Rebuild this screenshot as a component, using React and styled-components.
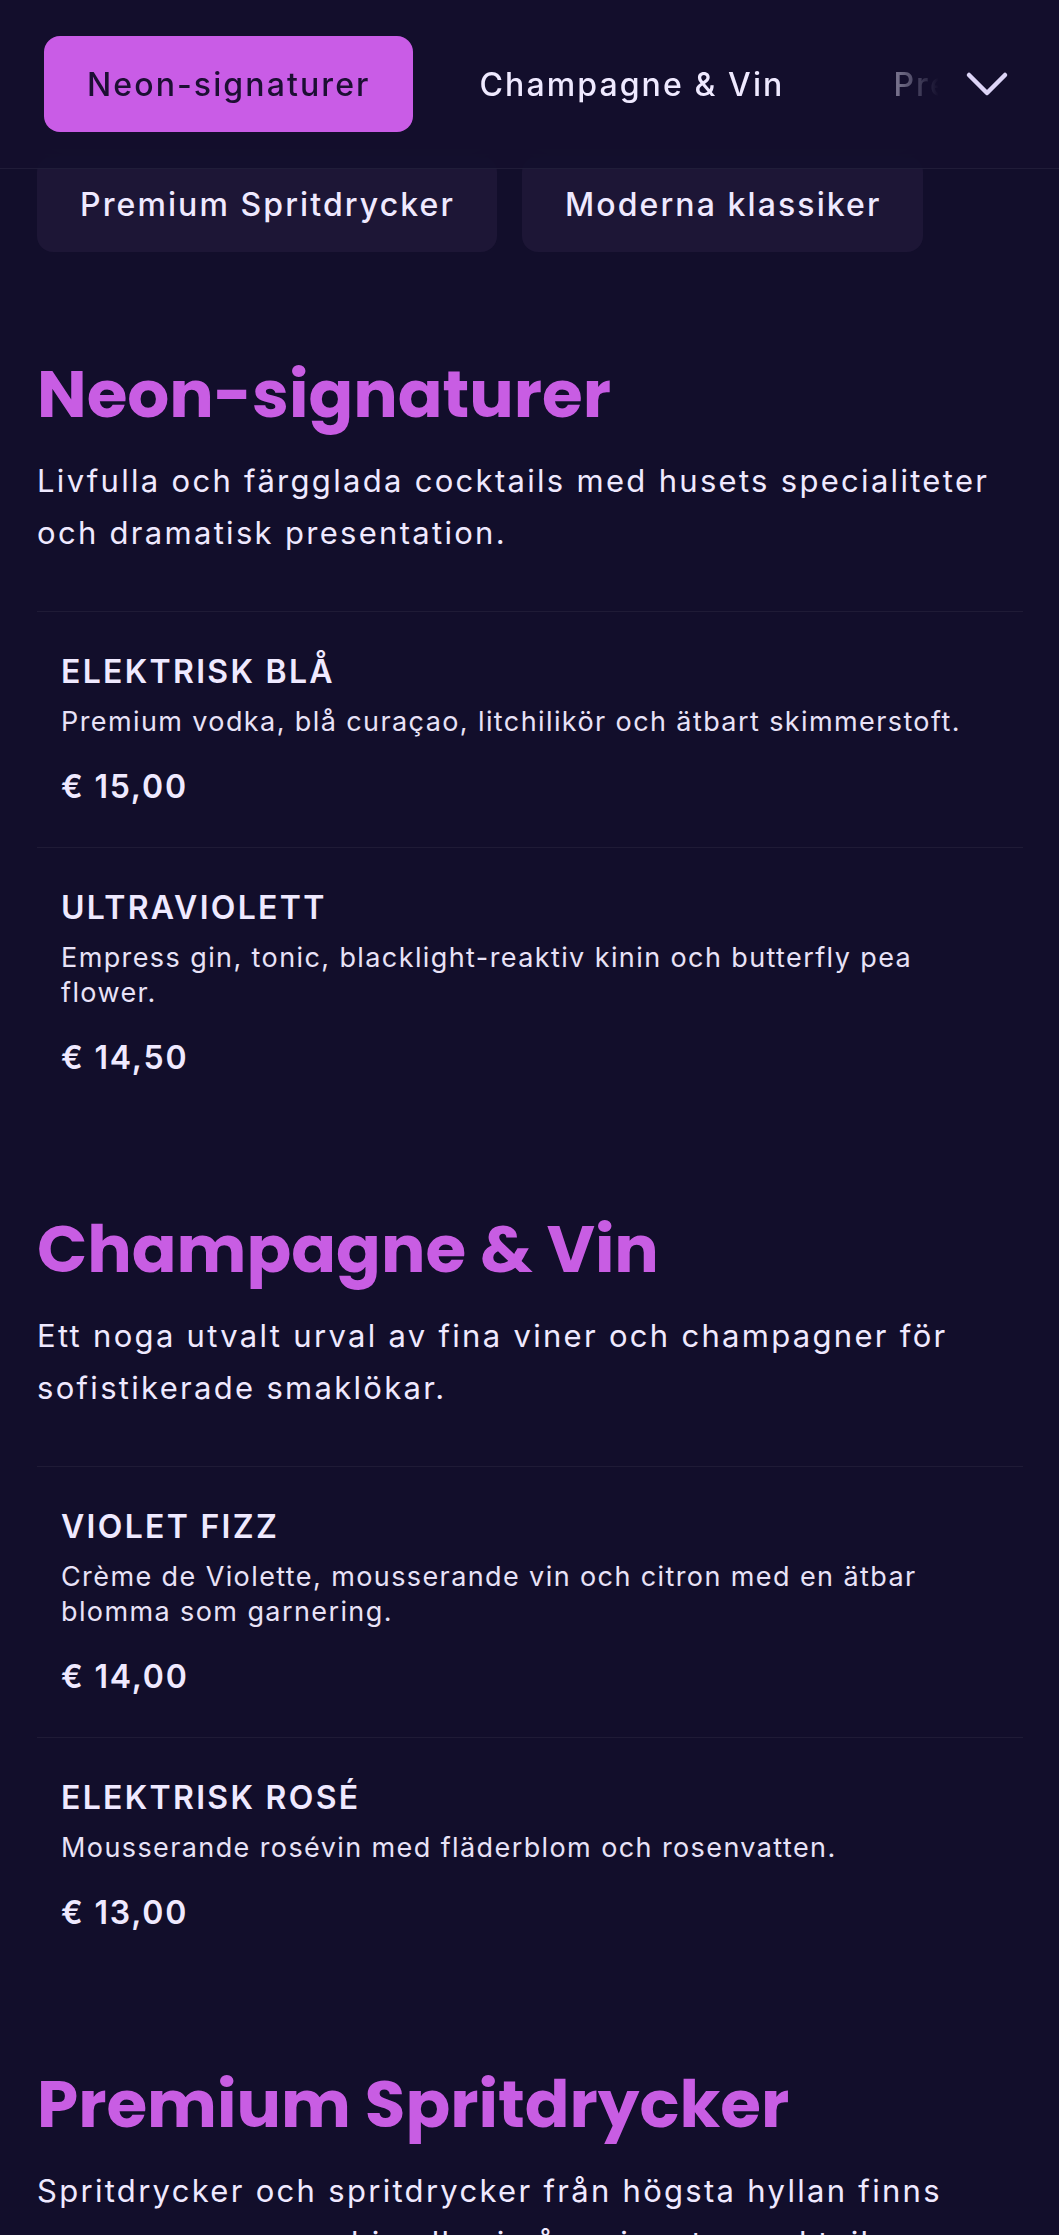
import React from "react";
import styled, { createGlobalStyle } from "styled-components";

const GlobalStyle = createGlobalStyle`
  html, body { margin: 0; padding: 0; background: #120e2b; }
  body {
    font-family: Inter, "Noto Sans", sans-serif;
    color: #efe9ff;
    -webkit-font-smoothing: antialiased;
  }
  * { box-sizing: border-box; }
`;

const Header = styled.header`
  position: fixed;
  top: 0;
  left: 0;
  right: 0;
  z-index: 10;
  height: 169px;
  display: flex;
  align-items: center;
  padding: 0 32px 0 44px;
  background: rgba(19, 15, 45, 0.94);
  backdrop-filter: blur(14px);
  border-bottom: 1px solid rgba(255, 255, 255, 0.06);
`;

const TabList = styled.nav`
  flex: 1;
  min-width: 0;
  display: flex;
  gap: 24px;
  overflow: hidden;
  -webkit-mask-image: linear-gradient(to right, #000 calc(100% - 92px), transparent 100%);
  mask-image: linear-gradient(to right, #000 calc(100% - 92px), transparent 100%);
`;

const Tab = styled.button`
  flex: none;
  height: 96px;
  padding: 0 42px 0 43px;
  border: none;
  border-radius: 16px;
  font-family: Inter, sans-serif;
  font-size: 32px;
  font-weight: 500;
  letter-spacing: 2.1px;
  white-space: nowrap;
  cursor: pointer;
  background: ${(p) => (p.$active ? "#c95ce6" : "transparent")};
  color: ${(p) => (p.$active ? "#1c0f33" : "#efe9ff")};
`;

const MenuToggle = styled.button`
  flex: none;
  width: 80px;
  height: 80px;
  margin-left: 8px;
  border: none;
  background: transparent;
  display: flex;
  align-items: center;
  justify-content: center;
  color: #ddd4f7;
  cursor: pointer;
`;

const Main = styled.main`
  padding: 156px 36px 0 37px;
`;

const ChipRow = styled.div`
  display: flex;
  flex-wrap: wrap;
  gap: 25px;
  margin-bottom: 11px;
`;

const Chip = styled.button`
  height: 96px;
  padding: 0 42px 0 43px;
  border: none;
  border-radius: 16px;
  background: #1d1636;
  color: #efe9ff;
  font-family: Inter, sans-serif;
  font-size: 32px;
  font-weight: 500;
  letter-spacing: 2.1px;
  white-space: nowrap;
`;

const Section = styled.section`
  padding-top: 92px;
`;

const SectionTitle = styled.h2`
  margin: 0 0 21px;
  font-family: Poppins, "Open Sans", sans-serif;
  font-weight: 700;
  font-size: 66px;
  line-height: 79px;
  color: #c85de3;
`;

const SectionIntro = styled.p`
  margin: 0 0 52px;
  font-size: 31px;
  line-height: 52px;
  letter-spacing: 2.3px;
  color: #efe9ff;
`;

const Item = styled.article`
  padding: 40px 24px;
  border-top: 1px solid rgba(255, 255, 255, 0.055);
`;

const ItemName = styled.h3`
  margin: 0;
  font-size: 32px;
  line-height: 40px;
  font-weight: 600;
  letter-spacing: 2.3px;
  color: #efe9ff;
`;

const ItemDesc = styled.p`
  margin: 12px 0 0;
  font-size: 27px;
  line-height: 35px;
  letter-spacing: 1.4px;
  color: #e8e2f7;
`;

const Price = styled.div`
  margin-top: 28px;
  font-size: 32px;
  line-height: 40px;
  font-weight: 600;
  letter-spacing: 1.8px;
  color: #efe9ff;
`;

const sections = [
  {
    title: "Neon-signaturer",
    intro: "Livfulla och färgglada cocktails med husets specialiteter och dramatisk presentation.",
    items: [
      { name: "ELEKTRISK BLÅ", desc: "Premium vodka, blå curaçao, litchilikör och ätbart skimmerstoft.", price: "€ 15,00" },
      { name: "ULTRAVIOLETT", desc: "Empress gin, tonic, blacklight-reaktiv kinin och butterfly pea flower.", price: "€ 14,50" },
    ],
  },
  {
    title: "Champagne & Vin",
    intro: "Ett noga utvalt urval av fina viner och champagner för sofistikerade smaklökar.",
    items: [
      { name: "VIOLET FIZZ", desc: "Crème de Violette, mousserande vin och citron med en ätbar blomma som garnering.", price: "€ 14,00" },
      { name: "ELEKTRISK ROSÉ", desc: "Mousserande rosévin med fläderblom och rosenvatten.", price: "€ 13,00" },
    ],
  },
  {
    title: "Premium Spritdrycker",
    intro: "Spritdrycker och spritdrycker från högsta hyllan finns serveras rena, med is eller i våra signaturcocktails.",
    items: [
      { name: "SVART ORKIDÉ", desc: "Lagrad rom, mörk choklad och en touch av vanilj.", price: "€ 16,00" },
    ],
  },
];

const tabs = ["Neon-signaturer", "Champagne & Vin", "Premium Spritdrycker", "Moderna klassiker"];

export default function App() {
  return (
    <>
      <GlobalStyle />
      <Header>
        <TabList>
          {tabs.map((t, i) => (
            <Tab key={t} $active={i === 0}>
              {t}
            </Tab>
          ))}
        </TabList>
        <MenuToggle aria-label="Visa alla kategorier">
          <svg width="44" height="26" viewBox="0 0 44 26" fill="none">
            <polyline
              points="4,4 22,22 40,4"
              stroke="currentColor"
              strokeWidth="4.5"
              strokeLinecap="round"
              strokeLinejoin="round"
            />
          </svg>
        </MenuToggle>
      </Header>
      <Main>
        <ChipRow>
          <Chip>Premium Spritdrycker</Chip>
          <Chip>Moderna klassiker</Chip>
        </ChipRow>
        {sections.map((s) => (
          <Section key={s.title}>
            <SectionTitle>{s.title}</SectionTitle>
            <SectionIntro>{s.intro}</SectionIntro>
            {s.items.map((it) => (
              <Item key={it.name}>
                <ItemName>{it.name}</ItemName>
                <ItemDesc>{it.desc}</ItemDesc>
                <Price>{it.price}</Price>
              </Item>
            ))}
          </Section>
        ))}
      </Main>
    </>
  );
}
